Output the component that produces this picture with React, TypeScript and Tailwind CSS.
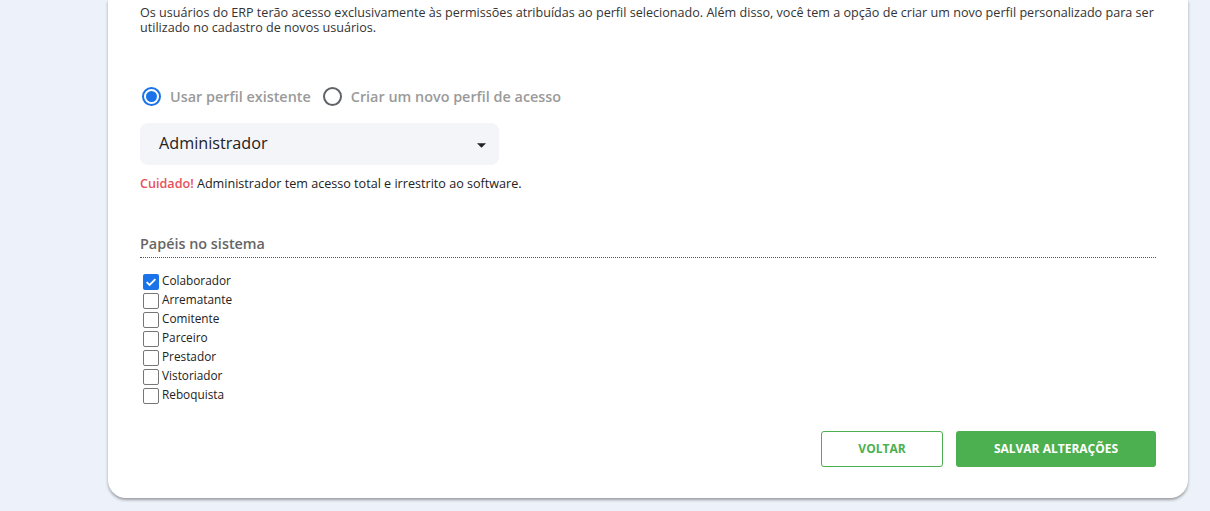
import React, { useState } from 'react';

const ROLES = ['Colaborador', 'Arrematante', 'Comitente', 'Parceiro', 'Prestador', 'Vistoriador', 'Reboquista'];

function Radio({ checked, label, onClick }: { checked: boolean; label: string; onClick: () => void }) {
  return (
    <label className="flex items-center gap-[9px] cursor-pointer" onClick={onClick}>
      <span
        className={
          'w-[19px] h-[19px] rounded-full border-2 flex items-center justify-center ' +
          (checked ? 'border-[#1a73e8]' : 'border-[#5f6368]')
        }
      >
        {checked && <span className="w-[11px] h-[11px] rounded-full bg-[#1a73e8]" />}
      </span>
      <span className="text-[14.4px] font-semibold text-[#9a9a9a]">{label}</span>
    </label>
  );
}

function Checkbox({ checked, label, onToggle }: { checked: boolean; label: string; onToggle: () => void }) {
  return (
    <label className="flex items-center h-[19px] cursor-pointer" onClick={onToggle}>
      <span
        className={
          'ml-[3px] mr-[3px] mt-[3px] w-[16px] h-[16px] rounded-[2px] flex items-center justify-center ' +
          (checked ? 'bg-[#1a73e8]' : 'border-[1.5px] border-[#767676] bg-white')
        }
      >
        {checked && (
          <svg viewBox="0 0 16 16" className="w-[14px] h-[14px]">
            <path d="M3 8.2 L6.4 11.4 L13 4.6" fill="none" stroke="white" strokeWidth="2" />
          </svg>
        )}
      </span>
      <span className="text-[11.8px] text-[#222]">{label}</span>
    </label>
  );
}

export default function App() {
  const [mode, setMode] = useState<'existing' | 'new'>('existing');
  const [roles, setRoles] = useState<string[]>(['Colaborador']);

  const toggle = (r: string) =>
    setRoles((prev) => (prev.includes(r) ? prev.filter((x) => x !== r) : [...prev, r]));

  return (
    <div className="min-h-[511px] bg-[#edf2fa] font-['Open_Sans',sans-serif] pl-[108px] pr-[22px] pb-[14px]">
      <div className="bg-white rounded-b-[18px] shadow-[0_2px_3px_rgba(0,0,0,0.35)] px-[32px] pb-[31px]">
        <p className="text-[12.6px] leading-[15px] text-[#333] pt-[5px]">
          Os usuários do ERP terão acesso exclusivamente às permissões atribuídas ao perfil selecionado. Além disso, você tem a opção de criar um novo perfil personalizado para ser utilizado no cadastro de novos usuários.
        </p>

        <div className="flex items-center gap-[12px] mt-[51px] ml-[2px]">
          <Radio checked={mode === 'existing'} label="Usar perfil existente" onClick={() => setMode('existing')} />
          <Radio checked={mode === 'new'} label="Criar um novo perfil de acesso" onClick={() => setMode('new')} />
        </div>

        <div className="mt-[15px] w-[359px] h-[42px] rounded-[8px] bg-[#f4f5f9] flex items-center justify-between pl-[19px] pr-[13px]">
          <span className="text-[16.2px] text-[#222]">Administrador</span>
          <svg viewBox="0 0 10 5" className="w-[9px] h-[5px] mt-[4px]">
            <path d="M0 0 L10 0 L5 5 Z" fill="#222" />
          </svg>
        </div>

        <p className="mt-[10px] text-[12.6px] text-[#222]">
          <span className="text-[#e8505b] font-semibold">Cuidado!</span> Administrador tem acesso total e irrestrito ao software.
        </p>

        <div className="mt-[39px] text-[14.4px] font-semibold text-[#666] pb-[3px] border-b border-dotted border-[#555]">
          Papéis no sistema
        </div>

        <div className="mt-[13px] flex flex-col">
          {ROLES.map((r) => (
            <Checkbox key={r} checked={roles.includes(r)} label={r} onToggle={() => toggle(r)} />
          ))}
        </div>

        <div className="mt-[27px] flex justify-end gap-[13px]">
          <button className="w-[122px] h-[36px] rounded-[3px] border border-[#4caf50] text-[#4caf50] text-[12px] font-bold">
            VOLTAR
          </button>
          <button className="w-[200px] h-[36px] rounded-[3px] bg-[#4caf50] text-white text-[12px] font-bold">
            SALVAR ALTERAÇÕES
          </button>
        </div>
      </div>
    </div>
  );
}
